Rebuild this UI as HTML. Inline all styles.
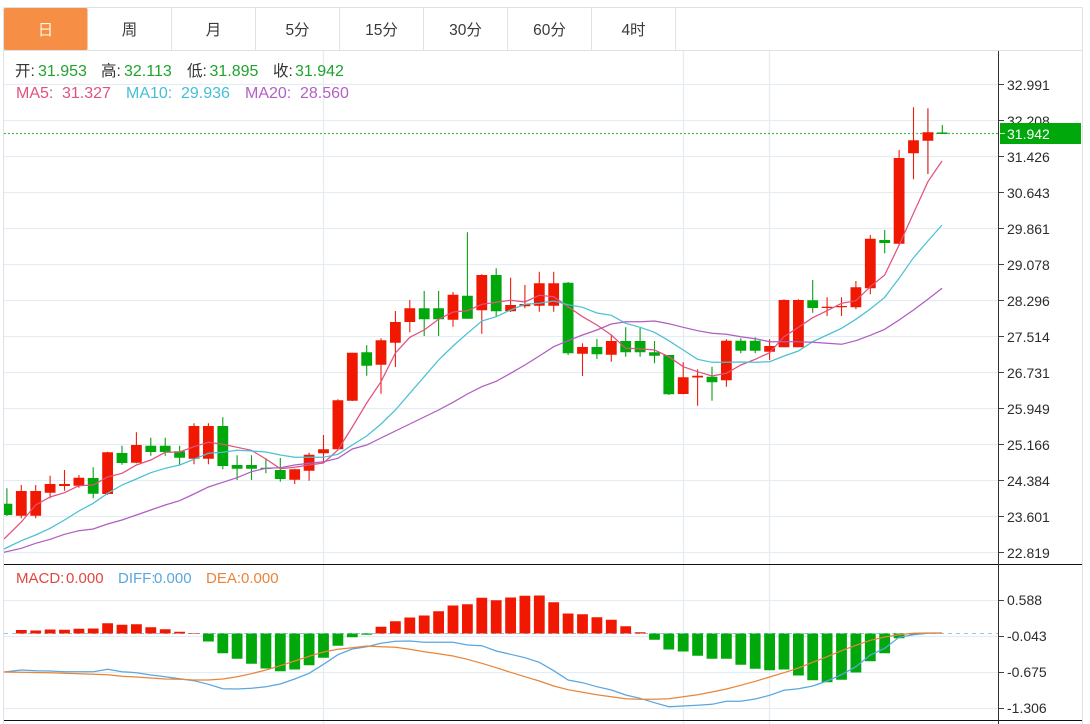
<!DOCTYPE html>
<html lang="zh">
<head>
<meta charset="utf-8">
<title>K线图</title>
<style>
html,body{margin:0;padding:0;background:#fff;width:1090px;height:724px;overflow:hidden}
svg{display:block}
text{font-family:"Liberation Sans","Noto Sans CJK SC",sans-serif}
.n{fill:none}
</style>
</head>
<body>
<svg width="1090" height="724" viewBox="0 0 1090 724" xmlns="http://www.w3.org/2000/svg">
<defs><clipPath id="c"><rect x="4" y="51" width="994" height="673"/></clipPath></defs>

<!-- outer frame -->
<path class="n" stroke="#dde2e7" d="M3.5 7.5H1082.5M3.5 7.5V724M1082.5 7.5V724M4 50.5H1082.5"/>

<!-- tabs -->
<rect x="4" y="8" width="83.5" height="42" rx="1.5" fill="#f68e45"/>
<path class="n" stroke="#dde2e7" d="M171.5 8V50M255.5 8V50M339.5 8V50M423.5 8V50M507.5 8V50M591.5 8V50M675.5 8V50"/>
<g font-size="15.5" text-anchor="middle" fill="#3a3a3a">
<text x="45.5" y="35" fill="#fff6e0">日</text>
<text x="129.5" y="35">周</text>
<text x="213.5" y="35">月</text>
<text x="297.5" y="35">5分</text>
<text x="381.5" y="35">15分</text>
<text x="465.5" y="35">30分</text>
<text x="549.5" y="35">60分</text>
<text x="633.5" y="35">4时</text>
</g>

<!-- grid -->
<path class="n" stroke="#e6edf2" stroke-width="1.3" d="M4 84.5H998M4 120.5H998M4 156.5H998M4 192.5H998M4 228.5H998M4 264.5H998M4 300.5H998M4 336.5H998M4 372.5H998M4 408.5H998M4 444.5H998M4 480.5H998M4 516.5H998M4 552.5H998M4 600.5H998M4 636.5H998M4 672.5H998M4 708.5H998M323.5 51V724M683.5 51V724M769.5 51V724"/>

<!-- panel separators -->
<path class="n" stroke="#111" d="M4 564.5H1082M4 720.5H1082"/>
<path class="n" stroke="#333" d="M998.5 51V724"/>
<path class="n" stroke="#444" d="M999 84.5H1004M999 120.5H1004M999 156.5H1004M999 192.5H1004M999 228.5H1004M999 264.5H1004M999 300.5H1004M999 336.5H1004M999 372.5H1004M999 408.5H1004M999 444.5H1004M999 480.5H1004M999 516.5H1004M999 552.5H1004M999 600.5H1004M999 636.5H1004M999 672.5H1004M999 708.5H1004"/>

<g clip-path="url(#c)">
<!-- last price line -->
<path class="n" stroke="#4fb85a" stroke-width="1.2" stroke-dasharray="2 2" d="M4 133.5H998"/>

<!-- wicks -->
<path class="n" stroke="#ee1c0c" stroke-width="1.1" d="M21.3 485V518.3M35.7 485V518.3M50.1 475.7V498.3M64.5 470V490.7M78.9 475V487.7M107.6 451.7V495M136.4 432.3V463.3M194 423.3V464.3M208.4 423.3V464.3M294.7 468.7V484M309.1 452.7V480.7M323.5 435V463.3M337.9 399.3V449.3M352.3 352.7V401M381 338.3V393.7M395.4 311V367M409.8 300V332.3M453 292V326.7M481.8 274.3V333.7M510.6 277.7V312M524.9 285V308.3M539.3 271.7V311.7M553.7 271.7V311.7M582.5 343.3V376M611.3 335V361.7M683.2 362.3V394.3M697.6 369.3V405.7M726.4 339.3V386.7M769.6 339.3V360M784 299.3V347.3M798.4 299.3V347.3M827.1 297.3V316M841.5 297.3V316M855.9 281V309.3M870.3 235V294.3M899.1 150V245M913.5 107.3V179.3"/>
<path class="n" stroke="#d9574c" stroke-width="1.5" d="M927.9 108.3V174"/>
<path class="n" stroke="#0aa012" stroke-width="1.1" d="M6.9 488.3V516M93.2 467.3V498.3M122 445.7V464.7M150.8 437.7V455.7M165.2 437.7V455.7M179.6 445.7V465.3M222.8 417.3V469.3M237.1 455.3V480M251.5 455.3V480M265.9 458.3V473.3M280.3 458V481.7M366.7 345.3V375.7M424.2 291V336M438.6 291V336M467.4 232.3V318.7M496.2 268.3V316.7M568.1 282V355M596.9 339V359M625.7 327.3V356.7M640.1 328V356.7M654.5 341V363.3M668.8 355V395M712 366.7V400.7M740.8 338.3V353.3M755.2 337.3V353.3M812.7 280V312.7M884.7 230V253.3M942.3 125V134"/>

<!-- bodies -->
<path class="n" stroke="#f01800" stroke-width="10.8" d="M21.3 491V515.7M35.7 491V515.7M50.1 484V492.7M64.5 484V486M78.9 477.7V485.7M107.6 452.3V494M136.4 445V462.7M194 426V458.7M208.4 426V458.7M294.7 469.3V479.7M309.1 454.7V470.7M323.5 449.3V453.3M337.9 400.3V449.3M352.3 352.7V400.7M381 340.3V364.7M395.4 322V342.7M409.8 308.3V322M453 294.7V319.7M481.8 275V310.3M510.6 305V311.3M524.9 304V306.3M539.3 283.3V305.7M553.7 283.3V305.7M582.5 347V353.7M611.3 341V354.7M683.2 377.3V394M697.6 375.8V377.5M726.4 340.7V380.3M769.6 346V351.7M784 300V347.3M798.4 300V347.3M827.1 306.7V308M841.5 306V307.3M855.9 287.3V307.3M870.3 238.7V288.3M899.1 158V243.7M913.5 140.3V153.3M927.9 132.3V140.7"/>
<path class="n" stroke="#00a80c" stroke-width="10.8" d="M6.9 503.7V515M93.2 478V493.7M122 453V463M150.8 445.7V452M165.2 445.7V452M179.6 451.3V457.7M222.8 426V466M237.1 465V468.7M251.5 465V468.7M265.9 467.7V469M280.3 470V479M366.7 352.3V365.7M424.2 308.3V319.3M438.6 308.3V319.3M467.4 295.7V318.7M496.2 275V311.3M568.1 282.7V353.3M596.9 347V354.3M625.7 341V352.3M640.1 341V352.3M654.5 352.3V355.7M668.8 355V394.3M712 376.7V382.3M740.8 340.7V350.7M755.2 340.7V350.7M812.7 300.3V308M884.7 240V243"/>
<path class="n" stroke="#00a80c" stroke-width="1.5" d="M937 133.2H947.6"/>

<!-- MA lines -->
<polyline class="n" stroke="#e0527f" stroke-width="1.25" points="4,539 21.3,522 35.7,505 50.1,497 64.5,492.7 78.9,485.7 93.2,485 107.6,477 122,473.3 136.4,465 150.8,460 165.2,452.3 179.6,452 194,446.7 208.4,442.3 222.8,444.3 237.1,447.3 251.5,450.3 265.9,459 280.3,468.7 294.7,467.3 309.1,465 323.5,463 337.9,450 352.3,427 366.7,403 381,381.7 395.4,353 409.8,337.3 424.2,330 438.6,319.3 453,312 467.4,310.7 481.8,304.3 496.2,302.3 510.6,300.3 524.9,302 539.3,295.3 553.7,296.7 568.1,306.7 582.5,316.7 596.9,325 611.3,335 625.7,348.3 640.1,348.7 654.5,350 668.8,356.7 683.2,366.7 697.6,371.7 712,376 726.4,373.3 740.8,365 755.2,359.3 769.6,352.7 784,336.7 798.4,327.3 812.7,317.7 827.1,310.7 841.5,303.3 855.9,300.7 870.3,286.7 884.7,275 899.1,245 913.5,213.3 927.9,181.7 942,161"/>
<polyline class="n" stroke="#4bc0d4" stroke-width="1.25" points="4,549 21.3,540.7 35.7,535 50.1,528.3 64.5,520 78.9,511 93.2,503.3 107.6,493.3 122,485 136.4,479 150.8,472.7 165.2,468.3 179.6,465 194,459.3 208.4,453.3 222.8,452.3 237.1,450.3 251.5,451 265.9,452 280.3,455 294.7,457.3 309.1,457.3 323.5,457.3 337.9,454.3 352.3,445 366.7,436 381,424 395.4,410 409.8,393.3 424.2,376.7 438.6,360 453,346 467.4,333.3 481.8,321 496.2,316.7 510.6,310 524.9,304.3 539.3,303.3 553.7,301 568.1,304.7 582.5,307.3 596.9,313 611.3,315.3 625.7,323.3 640.1,327.3 654.5,332.3 668.8,340.7 683.2,350 697.6,359.3 712,362.3 726.4,362.3 740.8,362 755.2,362.3 769.6,361.7 784,356 798.4,351 812.7,341.7 827.1,335 841.5,328.3 855.9,319.3 870.3,309 884.7,297.3 899.1,278.3 913.5,257.7 927.9,241 942,225"/>
<polyline class="n" stroke="#b05cc2" stroke-width="1.25" points="4,552.3 21.3,548.3 35.7,543.3 50.1,539.3 64.5,534.3 78.9,530.7 93.2,529 107.6,524 122,520 136.4,515 150.8,510 165.2,505 179.6,500.7 194,494 208.4,487 222.8,482.3 237.1,477.7 251.5,471.7 265.9,468.3 280.3,467.7 294.7,465 309.1,463.3 323.5,461.7 337.9,458.3 352.3,449 366.7,445 381,438 395.4,431 409.8,424 424.2,417 438.6,410 453,402.3 467.4,394 481.8,386.7 496.2,381.3 510.6,373.3 524.9,365 539.3,356 553.7,346.7 568.1,340.7 582.5,335 596.9,330 611.3,324 625.7,321.7 640.1,321.7 654.5,321 668.8,323.7 683.2,327.3 697.6,330.7 712,333.3 726.4,334.3 740.8,336.7 755.2,338.7 769.6,341.7 784,341.7 798.4,341.7 812.7,342.3 827.1,343.3 841.5,344.3 855.9,340.7 870.3,335.3 884.7,329.3 899.1,320 913.5,310 927.9,299.3 942,288.3"/>

<!-- MACD dashed zero -->
<path class="n" stroke="#8cc8e6" stroke-width="1" stroke-dasharray="4 4" d="M4 633.5H998"/>

<!-- histogram -->
<path class="n" stroke="#f01800" stroke-width="10.8" d="M21.3 630V633.5M35.7 630.5V633.5M50.1 629.5V633.5M64.5 629.8V633.5M78.9 628.8V633.5M93.2 628.5V633.5M107.6 623.2V633.5M122 624.8V633.5M136.4 624.2V633.5M150.8 627.2V633.5M165.2 629.2V633.5M179.6 631.8V633.5M194 633V633.5M381 626.8V633.5M395.4 621.2V633.5M409.8 617.5V633.5M424.2 615.5V633.5M438.6 611.2V633.5M453 605.5V633.5M467.4 604.2V633.5M481.8 597.8V633.5M496.2 600.2V633.5M510.6 597.5V633.5M524.9 595.8V633.5M539.3 595.5V633.5M553.7 602.2V633.5M568.1 613.5V633.5M582.5 614.2V633.5M596.9 617.2V633.5M611.3 619.8V633.5M625.7 626.2V633.5M640.1 632.2V633.5"/>
<path class="n" stroke="#00a80c" stroke-width="10.8" d="M208.4 633.5V641.5M222.8 633.5V653.2M237.1 633.5V658.8M251.5 633.5V663.8M265.9 633.5V668.5M280.3 633.5V671.2M294.7 633.5V669.5M309.1 633.5V665.2M323.5 633.5V657.8M337.9 633.5V645.8M352.3 633.5V637.2M366.7 633.5V634.8M654.5 633.5V639.8M668.8 633.5V649.5M683.2 633.5V651.5M697.6 633.5V655.8M712 633.5V658.8M726.4 633.5V658.8M740.8 633.5V664.8M755.2 633.5V668.8M769.6 633.5V670.2M784 633.5V669.5M798.4 633.5V675.5M812.7 633.5V680.2M827.1 633.5V682.2M841.5 633.5V679.8M855.9 633.5V672.5M870.3 633.5V661.2M884.7 633.5V653.2M899.1 633.5V638.2M913.5 633.5V634.5"/>

<!-- DIFF / DEA -->
<polyline class="n" stroke="#5aa6e0" stroke-width="1.25" points="4,672 21.3,670 35.7,670.7 50.1,671 64.5,671.7 78.9,671.7 93.2,671.7 107.6,669.3 122,671.7 136.4,672.7 150.8,675 165.2,676.7 179.6,678.7 194,680.7 208.4,684.3 222.8,688.7 237.1,689 251.5,688.3 265.9,686.7 280.3,684 294.7,679 309.1,673.3 323.5,664.3 337.9,654.7 352.3,649 366.7,646.7 381,643.3 395.4,641.3 409.8,641 424.2,642.3 438.6,642.3 453,642.3 467.4,645 481.8,645.7 496.2,651 510.6,654.3 524.9,657.7 539.3,662.3 553.7,670.7 568.1,680 582.5,682.7 596.9,686.7 611.3,690 625.7,695 640.1,698.3 654.5,702.7 668.8,706.7 683.2,706 697.6,705.3 712,704.3 726.4,701.3 740.8,701.3 755.2,699 769.6,695.3 784,690.3 798.4,688.7 812.7,686 827.1,681 841.5,674.7 855.9,666.7 870.3,655 884.7,648.3 899.1,637.3 913.5,634.7 927.9,633.3 942,633"/>
<polyline class="n" stroke="#e8853a" stroke-width="1.25" points="4,672 50.1,672.7 78.9,673.7 107.6,674.7 122,676.3 136.4,677 150.8,678 165.2,679 179.6,679.3 194,680 208.4,680 222.8,679 237.1,676.7 251.5,673.7 265.9,670 280.3,665.7 294.7,661 309.1,656.3 323.5,652 337.9,649.3 352.3,647.7 366.7,646 381,646.7 395.4,647.3 409.8,649.3 424.2,651.7 438.6,653.7 453,656 467.4,659.3 481.8,663.3 496.2,667.7 510.6,672.3 524.9,676.7 539.3,681 553.7,686 568.1,689.7 582.5,692.3 596.9,694.7 611.3,696.7 625.7,698.7 640.1,699.3 654.5,699.3 668.8,698.7 683.2,696.7 697.6,694.7 712,692 726.4,689 740.8,685.3 755.2,681.3 769.6,677 784,672.7 798.4,668 812.7,662.3 827.1,656.7 841.5,650.7 855.9,645.3 870.3,640.3 884.7,637 899.1,634.7 913.5,633.3 927.9,633 942,633"/>
</g>

<!-- axis labels -->
<g font-size="14" fill="#2c2c2c">
<text x="1007" y="90">32.991</text>
<text x="1007" y="126">32.208</text>
<text x="1007" y="162">31.426</text>
<text x="1007" y="198">30.643</text>
<text x="1007" y="234">29.861</text>
<text x="1007" y="270">29.078</text>
<text x="1007" y="306">28.296</text>
<text x="1007" y="342">27.514</text>
<text x="1007" y="378">26.731</text>
<text x="1007" y="414">25.949</text>
<text x="1007" y="450">25.166</text>
<text x="1007" y="486">24.384</text>
<text x="1007" y="522">23.601</text>
<text x="1007" y="558">22.819</text>
<text x="1007" y="605">0.588</text>
<text x="1007" y="641">-0.043</text>
<text x="1007" y="677">-0.675</text>
<text x="1007" y="713">-1.306</text>
</g>

<!-- price tag -->
<rect x="1000" y="123" width="81" height="21" fill="#00a80c"/>
<path class="n" stroke="#cfeecf" d="M1000 133.5H1005"/>
<text x="1007" y="139" font-size="14" fill="#fff">31.942</text>

<!-- legend -->
<g font-size="15.5" fill="#333">
<text x="15" y="76">开:</text><text x="101" y="76">高:</text><text x="187" y="76">低:</text><text x="273" y="76">收:</text>
</g>
<g font-size="16" fill="#1fa32d">
<text x="38" y="76">31.953</text><text x="124" y="76">32.113</text><text x="209.5" y="76">31.895</text><text x="295" y="76">31.942</text>
</g>
<g font-size="16">
<text x="16" y="98" fill="#e0527f">MA5:</text><text x="62" y="98" fill="#e0527f">31.327</text>
<text x="126" y="98" fill="#45bfd6">MA10:</text><text x="181" y="98" fill="#45bfd6">29.936</text>
<text x="245" y="98" fill="#b45fc4">MA20:</text><text x="300" y="98" fill="#b45fc4">28.560</text>
</g>
<g font-size="15">
<text x="16" y="583" fill="#e0473f">MACD:</text><text x="66" y="583" fill="#e0473f">0.000</text>
<text x="118" y="583" fill="#5aa6e0">DIFF:</text><text x="154" y="583" fill="#5aa6e0">0.000</text>
<text x="206" y="583" fill="#e8853a">DEA:</text><text x="241" y="583" fill="#e8853a">0.000</text>
</g>
</svg>
</body>
</html>
